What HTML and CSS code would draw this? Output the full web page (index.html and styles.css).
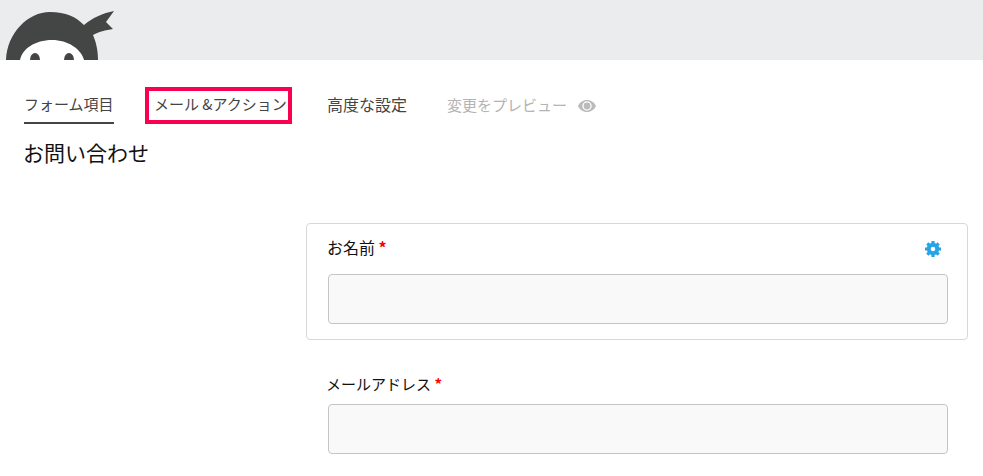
FILE: index.html
```html
<!DOCTYPE html>
<html lang="ja">
<head>
<meta charset="utf-8">
<title>お問い合わせ</title>
<link rel="stylesheet" href="styles.css">
</head>
<body>
<header class="topbar">
  <svg class="logo" width="125" height="60" viewBox="0 0 125 60" aria-hidden="true">
    <path class="logo-dark" d="M6 60C7 33 28 12 50 12C66 12 76 17 84 25C92 18 103 13 114 11L106 22L113 29C106 30 98 32 93 35C96 42 98 50 98 60Z"/>
    <path class="logo-face" d="M20 60C22 49 35 40 52 40C68 40 81 49 84 60Z"/>
    <ellipse class="logo-dark" cx="35" cy="60" rx="5" ry="7"/>
    <ellipse class="logo-dark" cx="69" cy="60" rx="5" ry="7"/>
  </svg>
</header>
<main class="page">
  <nav class="tabs">
    <a class="tab tab-active">フォーム項目</a>
    <a class="tab tab-marked">メール &amp;アクション</a>
    <a class="tab tab-large">高度な設定</a>
    <a class="tab tab-muted">変更をプレビュー
      <svg class="eye" width="18" height="12" viewBox="0 0 18 12" aria-hidden="true">
        <path fill-rule="evenodd" d="M9 0C5 0 1.500 2.500 0 6C1.500 9.500 5 12 9 12C13 12 16.500 9.500 18 6C16.500 2.500 13 0 9 0ZM9 1.300A4.700 4.700 0 1 1 9 10.700A4.700 4.700 0 1 1 9 1.300Z"/>
        <circle cx="9" cy="6" r="3.400"/>
      </svg>
    </a>
  </nav>
  <h1 class="title">お問い合わせ</h1>
  <form class="form">
    <section class="field field-card">
      <div class="field-head">
        <label class="label label-large">お名前 <span class="req">*</span></label>
        <svg class="gear" width="16" height="16" viewBox="0 0 18 18" aria-hidden="true">
          <g class="gear-teeth">
            <path d="M9 0V18M0 9H18M2.600 2.600L15.400 15.400M15.400 2.600L2.600 15.400"/>
          </g>
          <circle class="gear-ring" cx="9" cy="9" r="4.800"/>
        </svg>
      </div>
      <div class="input"></div>
    </section>
    <section class="field field-plain">
      <label class="label">メールアドレス <span class="req">*</span></label>
      <div class="input"></div>
    </section>
  </form>
</main>
</body>
</html>
```
FILE: styles.css
```css
* { box-sizing: border-box; }
html, body { margin: 0; height: 100%; overflow: hidden; }
body {
  background: #fff;
  color: #333;
  font-family: "Noto Sans CJK JP", "Noto Sans", sans-serif;
}
.topbar {
  height: 60px;
  background: #ebecee;
  overflow: hidden;
}
.logo { display: block; }
.logo-dark { fill: #444645; }
.logo-face { fill: #fff; }
.page { padding: 27px 15px 0 24px; }
.tabs {
  display: flex;
  height: 37px;
  font-size: 15px;
  line-height: 34px;
  color: #444;
}
.tab { display: block; height: 37px; white-space: nowrap; }
.tab-active {
  width: 90px;
  border-bottom: 2px solid #444;
  margin-right: 31px;
}
.tab-marked {
  width: 147px;
  margin-right: 35px;
  padding-left: 5px;
  border: 4px solid #fa0050;
  line-height: 26px;
}
.tab-large { font-size: 16px; margin-right: 40px; }
.tab-muted {
  color: #b4b4b4;
  display: flex;
  align-items: center;
  gap: 11px;
  padding-bottom: 2px;
}
.eye { fill: #bbb; margin-top: 2px; }
.title {
  margin: 13px 0 0 -1px;
  font-size: 21px;
  line-height: 30px;
  font-weight: 400;
  color: #111;
}
.form { margin-left: 282px; margin-top: 56px; }
.field-card {
  height: 117px;
  border: 1px solid #d8d8d8;
  border-radius: 4px;
  padding: 11px 19px 0 20px;
}
.field-head {
  display: flex;
  justify-content: space-between;
  align-items: center;
  height: 28px;
  padding-right: 7px;
  margin-bottom: 11px;
}
.label { font-size: 15px; line-height: 28px; color: #111; }
.label-large { font-size: 16px; margin-bottom: 4px; }
.req { color: #f00; font-weight: 700; }
.gear-teeth path { stroke: #27a4e5; stroke-width: 3.600; fill: none; }
.gear-ring { fill: #fff; stroke: #27a4e5; stroke-width: 4.400; }
.input {
  height: 50px;
  margin-left: 1px;
  background: #f9f9f9;
  border: 1px solid #c4c4c4;
  border-radius: 4px;
}
.field-plain { margin-top: 30px; padding: 0 20px 0 21px; }
.field-plain .label { display: block; height: 34px; margin-left: -1px; }
```
